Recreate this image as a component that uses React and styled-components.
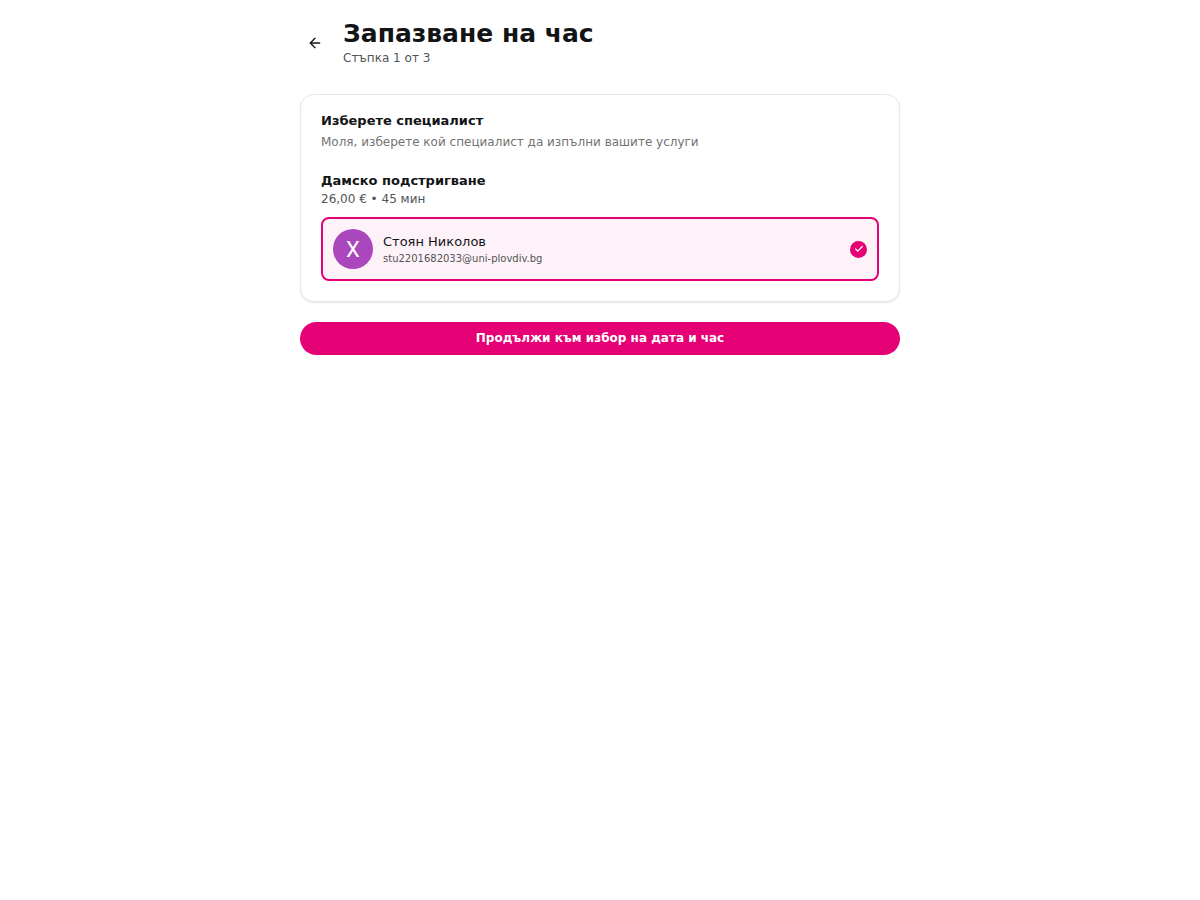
import React, { useState } from 'react';
import styled, { createGlobalStyle } from 'styled-components';
import { ArrowLeft, Check } from 'lucide-react';

const GlobalStyle = createGlobalStyle`
  * {
    box-sizing: border-box;
  }

  body {
    margin: 0;
    background: #ffffff;
    color: #121416;
    font-family: "DejaVu Sans", sans-serif;
  }

  h1, h2, h3, p {
    margin: 0;
  }
`;

const specialists = [
  { id: 1, name: 'Стоян Николов', email: 'stu2201682033@uni-plovdiv.bg', initial: 'X' },
];

const SpecialistOption = ({ specialist, checked, onSelect }) => (
  <Option $selected={checked}>
    <HiddenRadio
      type="radio"
      name="specialist"
      checked={checked}
      onChange={() => onSelect(specialist.id)}
    />
    <Avatar aria-hidden="true">{specialist.initial}</Avatar>
    <OptionText>
      <Name>{specialist.name}</Name>
      <Email>{specialist.email}</Email>
    </OptionText>
    {checked && (
      <CheckBadge>
        <Check size={10} strokeWidth={3} />
      </CheckBadge>
    )}
  </Option>
);

const App = () => {
  const [selected, setSelected] = useState(1);

  return (
    <>
      <GlobalStyle />
      <Page>
        <Header>
          <BackButton type="button" aria-label="Назад">
            <ArrowLeft size={16} strokeWidth={2} />
          </BackButton>
          <div>
            <Title>Запазване на час</Title>
            <Muted>Стъпка 1 от 3</Muted>
          </div>
        </Header>

        <Card>
          <CardHeader>
            <Heading as="h2">Изберете специалист</Heading>
            <Description>Моля, изберете кой специалист да изпълни вашите услуги</Description>
          </CardHeader>
          <Service>
            <div>
              <Heading>Дамско подстригване</Heading>
              <Muted>26,00 € • 45 мин</Muted>
            </div>
            {specialists.map((item) => (
              <SpecialistOption
                key={item.id}
                specialist={item}
                checked={selected === item.id}
                onSelect={setSelected}
              />
            ))}
          </Service>
        </Card>

        <SubmitButton type="button">Продължи към избор на дата и час</SubmitButton>
      </Page>
    </>
  );
};

const Page = styled.main`
  display: flex;
  flex-direction: column;
  gap: 20px;
  max-width: 600px;
  margin: 0 auto;
  padding: 20px 0;
`;

const Header = styled.header`
  display: flex;
  align-items: center;
  gap: 13px;
  margin-bottom: 8px;
`;

const BackButton = styled.button`
  display: flex;
  align-items: center;
  justify-content: center;
  width: 30px;
  height: 30px;
  padding: 0;
  border: none;
  border-radius: 50%;
  background: transparent;
  color: #121416;
  cursor: pointer;
`;

const Title = styled.h1`
  margin-bottom: 2px;
  font-size: 25px;
  line-height: 28px;
  font-weight: 700;
`;

const Muted = styled.p`
  font-size: 12px;
  line-height: 16px;
  color: #525456;
`;

const Card = styled.section`
  padding: 16px 20px 20px;
  border: 1px solid #ebe6e8;
  border-radius: 14px;
  background: #ffffff;
  box-shadow: 0 1px 2px rgba(0, 0, 0, 0.1);
`;

const CardHeader = styled.div`
  display: flex;
  flex-direction: column;
  gap: 3px;
  margin-bottom: 21px;
`;

const Heading = styled.h3`
  font-size: 13px;
  line-height: 20px;
  font-weight: 700;
`;

const Description = styled.p`
  font-size: 12px;
  line-height: 16px;
  color: #737373;
`;

const Service = styled.div`
  display: flex;
  flex-direction: column;
  gap: 10px;
`;

const Option = styled.label`
  position: relative;
  display: flex;
  align-items: center;
  gap: 10px;
  padding: 10px;
  border: 2px solid ${({ $selected }) => ($selected ? '#e60076' : '#ebe6e8')};
  border-radius: 8px;
  background: ${({ $selected }) => ($selected ? '#fdf2f8' : '#ffffff')};
  cursor: pointer;
`;

const HiddenRadio = styled.input`
  position: absolute;
  opacity: 0;
  pointer-events: none;
`;

const Avatar = styled.span`
  display: flex;
  align-items: center;
  justify-content: center;
  width: 40px;
  height: 40px;
  border-radius: 50%;
  background: #ab47bc;
  color: #ffffff;
  font-family: Roboto, sans-serif;
  font-size: 22px;
`;

const OptionText = styled.span`
  display: flex;
  flex: 1;
  flex-direction: column;
`;

const Name = styled.span`
  font-size: 13px;
  line-height: 20px;
`;

const Email = styled.span`
  font-size: 10px;
  line-height: 14px;
  color: #525456;
`;

const CheckBadge = styled.span`
  display: flex;
  align-items: center;
  justify-content: center;
  width: 17px;
  height: 17px;
  border-radius: 50%;
  background: #e60076;
  color: #ffffff;
`;

const SubmitButton = styled.button`
  width: 100%;
  height: 33px;
  padding: 0 16px 2px;
  border: none;
  border-radius: 17px;
  background: #e60076;
  color: #ffffff;
  font-family: inherit;
  font-size: 12px;
  font-weight: 700;
  cursor: pointer;
`;

export default App;
